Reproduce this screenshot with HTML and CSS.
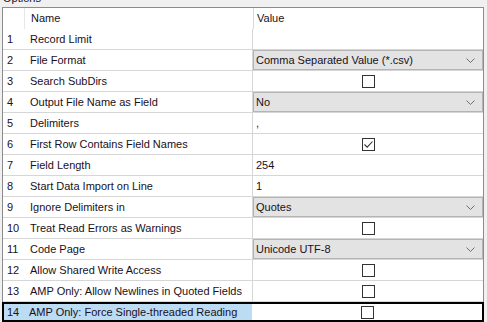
FILE: index.html
```html
<!DOCTYPE html>
<html lang="en">
<head>
    <meta charset="UTF-8">
    <title>Options</title>
    <link rel="stylesheet" href="styles.css">
</head>
<body>
    <div class="caption">Options</div>
    <div class="grid">
        <div class="head">
            <div class="num"></div>
            <div class="name">Name</div>
            <div class="value">Value</div>
        </div>
        <div class="row first">
            <div class="num">1</div>
            <div class="name">Record Limit</div>
            <div class="value"></div>
        </div>
        <div class="row">
            <div class="num">2</div>
            <div class="name">File Format</div>
            <div class="value combo"><span>Comma Separated Value (*.csv)</span><svg class="chev" width="9" height="5" viewBox="0 0 9 5"><path d="M0.5 0.5 L4.5 4.5 L8.5 0.5" fill="none" stroke="#707070" stroke-width="1"/></svg></div>
        </div>
        <div class="row">
            <div class="num">3</div>
            <div class="name">Search SubDirs</div>
            <div class="value check"><span class="box"></span></div>
        </div>
        <div class="row">
            <div class="num">4</div>
            <div class="name">Output File Name as Field</div>
            <div class="value combo"><span>No</span><svg class="chev" width="9" height="5" viewBox="0 0 9 5"><path d="M0.5 0.5 L4.5 4.5 L8.5 0.5" fill="none" stroke="#707070" stroke-width="1"/></svg></div>
        </div>
        <div class="row">
            <div class="num">5</div>
            <div class="name">Delimiters</div>
            <div class="value">,</div>
        </div>
        <div class="row">
            <div class="num">6</div>
            <div class="name">First Row Contains Field Names</div>
            <div class="value check"><span class="box"><svg width="11" height="11" viewBox="0 0 11 11"><path d="M1.5 5.5 L4.2 8.2 L9.5 2.5" fill="none" stroke="#333" stroke-width="1.1"/></svg></span></div>
        </div>
        <div class="row">
            <div class="num">7</div>
            <div class="name">Field Length</div>
            <div class="value">254</div>
        </div>
        <div class="row">
            <div class="num">8</div>
            <div class="name">Start Data Import on Line</div>
            <div class="value">1</div>
        </div>
        <div class="row">
            <div class="num">9</div>
            <div class="name">Ignore Delimiters in</div>
            <div class="value combo"><span>Quotes</span><svg class="chev" width="9" height="5" viewBox="0 0 9 5"><path d="M0.5 0.5 L4.5 4.5 L8.5 0.5" fill="none" stroke="#707070" stroke-width="1"/></svg></div>
        </div>
        <div class="row">
            <div class="num">10</div>
            <div class="name">Treat Read Errors as Warnings</div>
            <div class="value check"><span class="box"></span></div>
        </div>
        <div class="row">
            <div class="num">11</div>
            <div class="name">Code Page</div>
            <div class="value combo"><span>Unicode UTF-8</span><svg class="chev" width="9" height="5" viewBox="0 0 9 5"><path d="M0.5 0.5 L4.5 4.5 L8.5 0.5" fill="none" stroke="#707070" stroke-width="1"/></svg></div>
        </div>
        <div class="row">
            <div class="num">12</div>
            <div class="name">Allow Shared Write Access</div>
            <div class="value check"><span class="box"></span></div>
        </div>
        <div class="row">
            <div class="num">13</div>
            <div class="name">AMP Only: Allow Newlines in Quoted Fields</div>
            <div class="value check"><span class="box"></span></div>
        </div>
        <div class="row selected">
            <div class="num">14</div>
            <div class="name">AMP Only: Force Single-threaded Reading</div>
            <div class="value check"><span class="box"></span></div>
        </div>
    </div>
</body>
</html>
```

FILE: styles.css
```css
body {
    margin: 0;
    background: #f0f0f0;
    font-family: "Liberation Sans", Arial, sans-serif;
    font-size: 11px;
    color: #1a1020;
    overflow: hidden;
}
.caption {
    margin-top: -8px;
    padding-left: 3px;
    height: 15px;
    line-height: 12px;
}
.grid {
    margin: 0 3px 0 2px;
    border: 1px solid #8c8c8c;
    border-bottom: none;
    background: white;
}
.head, .row {
    display: flex;
    height: 20px;
    line-height: 20px;
}
.head {
    height: 21px;
}
.row {
    border-bottom: 1px solid #d6d6d6;
}
.num {
    width: 17px;
    padding-left: 4px;
    flex: none;
}
.head .num {
    border-right: 1px solid #e8e8e8;
}
.name {
    width: 222px;
    padding-left: 6px;
    flex: none;
    white-space: nowrap;
}
.value {
    flex: 1;
    border-left: 1px solid #d6d6d6;
    padding-left: 3px;
}
.combo {
    background: #e3e3e3;
    box-shadow: inset 0 0 0 1px #b4b4b4;
    display: flex;
    align-items: center;
    justify-content: space-between;
    padding-right: 8px;
}
.check {
    display: flex;
    align-items: center;
    justify-content: center;
    padding-left: 0;
}
.box {
    width: 11px;
    height: 11px;
    border: 1px solid #333;
    background: white;
    display: flex;
}
.selected {
    margin: 0 -1px;
    border-bottom: none;
    box-shadow: inset 0 0 0 2px #000;
}
.selected .num, .selected .name {
    background: #bcdcf4;
}
.selected .num {
    margin: 2px 0 2px 2px;
    width: 16px;
    padding-left: 3px;
    line-height: 16px;
    height: 16px;
}
.selected .name {
    margin: 2px 0;
    height: 16px;
    line-height: 16px;
}
.selected .value {
    margin: 2px 2px 2px 0;
}
```
